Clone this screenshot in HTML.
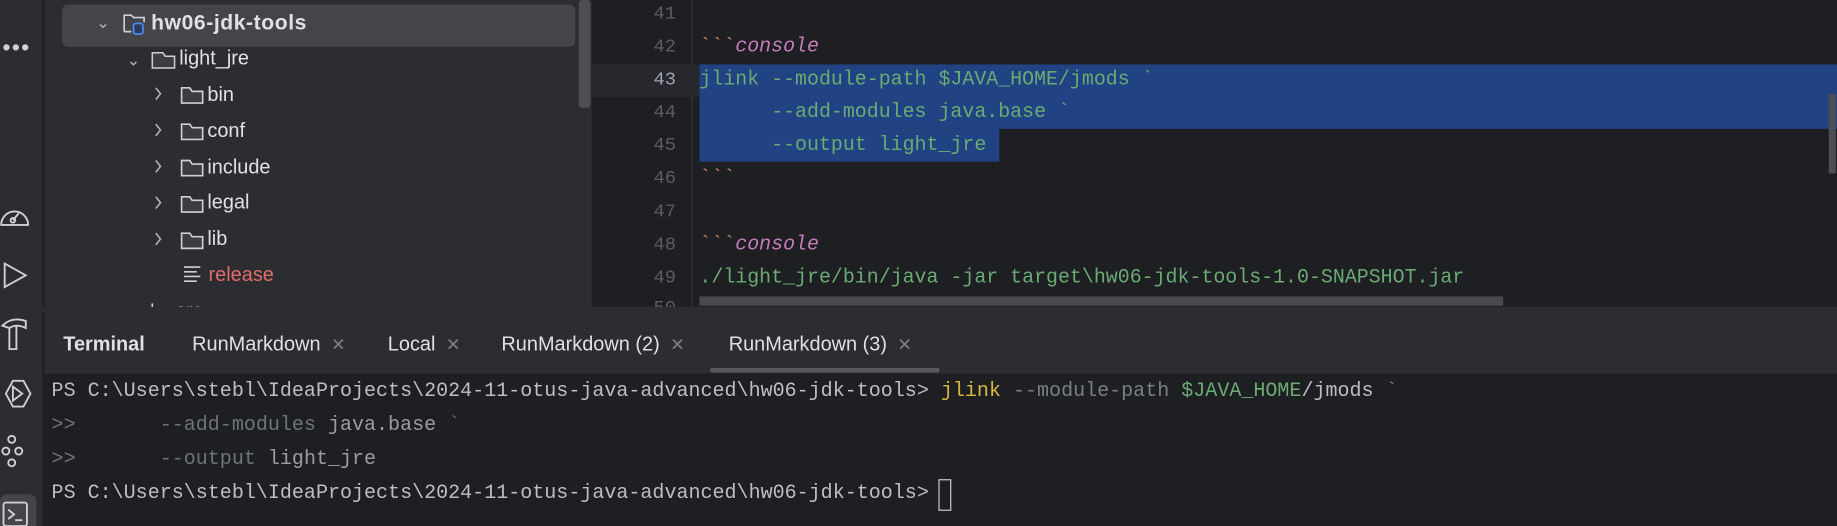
<!DOCTYPE html>
<html><head><meta charset="utf-8"><style>
*{margin:0;padding:0;box-sizing:border-box}
body{width:1837px;height:525px;overflow:hidden;background:#1e1f22;position:relative;font-family:"Liberation Sans",sans-serif}
#w{position:absolute;left:0;top:0;width:1568px;height:449px;transform:scale(1.17156);transform-origin:0 0;overflow:hidden}
.abs{position:absolute}
.mono{font-family:"Liberation Mono",monospace;font-size:17px;white-space:pre}
.tree{color:#dfe1e5;font-size:17px}
.tree div{position:absolute;height:30px;line-height:30px}
.chev{color:#aeb1b6;font-size:14px}
.ln{position:absolute;left:505px;width:72px;text-align:right;color:#5a5d63;font-family:"Liberation Mono",monospace;font-size:16px}
.code{position:absolute;left:597px;color:#6aab73}
.tick{color:#cf8e6d}
.cons{color:#c77dbb;font-style:italic}
.tab{position:absolute;top:284px;font-size:17px;color:#dfe1e5}
.x{color:#7b7e84;font-size:15px}
.term{font-size:17.1px}
</style></head><body><div id="w">
<!-- left strip -->
<div class="abs" style="left:0;top:0;width:37px;height:449px;background:#2b2d30;border-right:1px solid #1e1f22"></div>
<div class="abs" style="left:2px;top:30px;color:#ced0d6;font-size:20px;letter-spacing:1px">•••</div>
<svg class="abs" style="left:0;top:170px" width="30" height="280" fill="none" stroke="#ced0d6" stroke-width="1.6">
<path d="M1 22 A11 11 0 1 1 24 22 Z M11 18 L16 12"/><circle cx="11" cy="18" r="2"/>
<path d="M4 55 L22 65 L4 75 Z"/>
<path d="M2 108 Q10 100 22 104 L22 110 Q14 106 8 110 Z M8 110 L8 128 L14 128 L14 108"/>
<path d="M5 166 L11 155 L20 155 L26 166 L20 177 L11 177 Z M11 160 L19 166 L11 172 Z"/>
<circle cx="10" cy="205" r="3"/><circle cx="10" cy="225" r="3"/><circle cx="5" cy="215" r="3"/><circle cx="16" cy="215" r="3"/>
</svg>
<div class="abs" style="left:0;top:422px;width:31px;height:40px;background:#43454a;border-radius:6px"></div>
<svg class="abs" style="left:2px;top:428px" width="24" height="24" fill="none" stroke="#ced0d6" stroke-width="1.6"><rect x="1" y="1" width="20" height="20" rx="2"/><path d="M5 7 L10 11 L5 15 M11 16 L17 16"/></svg>

<!-- project panel -->
<div class="abs" style="left:38px;top:0;width:467px;height:267px;background:#2b2d30"></div>
<div class="abs" style="left:53px;top:4px;width:438px;height:36px;background:#43454a;border-radius:5px"></div>
<div class="abs" style="left:494px;top:0;width:10px;height:92px;background:#4d4f53;border-radius:3px"></div>
<div class="tree">
<div class="chev" style="left:82px;top:4px">⌄</div>
<svg class="abs" style="left:104px;top:10px" width="24" height="22" fill="none" stroke="#ced0d6" stroke-width="1.4"><path d="M2 17 V3 H8 L10 5 H19 V9"/><path d="M2 17 H8"/><rect x="10" y="10" width="8" height="9" rx="2" stroke="#548af7" fill="#2a3a60"/></svg>
<div style="left:129px;top:4px;font-weight:bold;font-size:18px;letter-spacing:.5px">hw06-jdk-tools</div>
<div class="chev" style="left:108px;top:36px">⌄</div>
<div style="left:153px;top:35px">light_jre</div>
<div style="left:177px;top:66px">bin</div>
<div style="left:177px;top:97px">conf</div>
<div style="left:177px;top:128px">include</div>
<div style="left:177px;top:158px">legal</div>
<div style="left:177px;top:189px">lib</div>
<div style="left:178px;top:220px;color:#e06c6c">release</div>
<div style="left:150px;top:251px;height:16px;overflow:hidden">src</div>
</div>
<svg class="abs" style="left:100px;top:40px" width="80" height="230" fill="none" stroke="#ced0d6" stroke-width="1.4">
<path d="M30 5 V18 H49 V8 H41 L39 5 Z" fill="#3b3d41" stroke-width="1.3"/>
<g stroke="#aeb1b6"><path d="M33 35 L37 40 L33 45"/><path d="M33 66 L37 71 L33 76"/><path d="M33 97 L37 102 L33 107"/><path d="M33 128 L37 133 L33 138"/><path d="M33 159 L37 164 L33 169"/></g>
<g fill="#3b3d41"><path d="M55 35 V48 H73 V38 H64 L62 35 Z"/><path d="M55 66 V79 H73 V69 H64 L62 66 Z"/><path d="M55 97 V110 H73 V100 H64 L62 97 Z"/><path d="M55 128 V141 H73 V131 H64 L62 128 Z"/><path d="M55 159 V172 H73 V162 H64 L62 159 Z"/></g>
<path d="M57 188 H71 M57 192 H68 M57 196 H71 M57 200 H68"/><path d="M30 219 V230 H49" />
</svg>

<!-- editor -->
<div class="abs" style="left:590px;top:0;width:1px;height:267px;background:#313438"></div>
<div class="abs" style="left:505px;top:55px;width:92px;height:28px;background:#26282e"></div>
<div class="abs" style="left:597px;top:55px;width:1000px;height:55px;background:#214283"></div>
<div class="abs" style="left:597px;top:110px;width:256px;height:28px;background:#214283"></div>
<div class="abs" style="left:1561px;top:80px;width:6px;height:68px;background:#4d4f53"></div>
<div class="abs" style="left:597px;top:253px;width:686px;height:8px;background:#48494c"></div>
<div class="abs" style="left:0;top:262px;width:1600px;height:5px;background:#2b2d30"></div>
<div class="ln" style="top:3px">41</div>
<div class="ln" style="top:31px">42</div>
<div class="ln" style="top:59px;color:#a1a3ab">43</div>
<div class="ln" style="top:87px">44</div>
<div class="ln" style="top:115px">45</div>
<div class="ln" style="top:143px">46</div>
<div class="ln" style="top:172px">47</div>
<div class="ln" style="top:200px">48</div>
<div class="ln" style="top:228px">49</div>
<div class="ln" style="top:254px;height:8px;overflow:hidden">50</div>
<div class="mono code" style="top:31px"><span class="tick">&#96;&#96;&#96;</span><span class="cons">console</span></div>
<div class="mono code" style="top:59px">jlink --module-path $JAVA_HOME/jmods &#96;</div>
<div class="mono code" style="top:87px">      --add-modules java.base &#96;</div>
<div class="mono code" style="top:115px">      --output light_jre</div>
<div class="mono code tick" style="top:143px">&#96;&#96;&#96;</div>
<div class="mono code" style="top:200px"><span class="tick">&#96;&#96;&#96;</span><span class="cons">console</span></div>
<div class="mono code" style="top:228px">./light_jre/bin/java -jar target\hw06-jdk-tools-1.0-SNAPSHOT.jar</div>

<!-- terminal tabs -->
<div class="abs" style="left:38px;top:267px;width:1600px;height:52px;background:#2b2d30"></div>
<div class="tab" style="left:54px;font-weight:bold;color:#dfe1e5">Terminal</div>
<div class="tab" style="left:164px">RunMarkdown <span class="x">&nbsp;✕</span></div>
<div class="tab" style="left:331px">Local <span class="x">&nbsp;✕</span></div>
<div class="tab" style="left:428px">RunMarkdown (2) <span class="x">&nbsp;✕</span></div>
<div class="tab" style="left:622px">RunMarkdown (3) <span class="x">&nbsp;✕</span></div>
<div class="abs" style="left:606px;top:314px;width:196px;height:4px;background:#585a5f;border-radius:2px"></div>

<!-- terminal -->
<div class="mono term abs" style="left:44px;top:325px;color:#bcbec4">PS C:\Users\stebl\IdeaProjects\2024-11-otus-java-advanced\hw06-jdk-tools> <span style="color:#d5b93f">jlink</span> <span style="color:#7a7e85">--module-path</span> <span style="color:#6aab73">$JAVA_HOME</span>/jmods <span style="color:#7a7e85">&#96;</span></div>
<div class="mono term abs" style="left:44px;top:354px;color:#6f737a">&gt;&gt;       --add-modules <span style="color:#9a9da3">java.base</span> &#96;</div>
<div class="mono term abs" style="left:44px;top:383px;color:#6f737a">&gt;&gt;       --output <span style="color:#9a9da3">light_jre</span></div>
<div class="mono term abs" style="left:44px;top:412px;color:#bcbec4">PS C:\Users\stebl\IdeaProjects\2024-11-otus-java-advanced\hw06-jdk-tools> </div>
<div class="abs" style="left:801px;top:409px;width:11px;height:27px;border:1px solid #ced0d6"></div>
</div></body></html>
